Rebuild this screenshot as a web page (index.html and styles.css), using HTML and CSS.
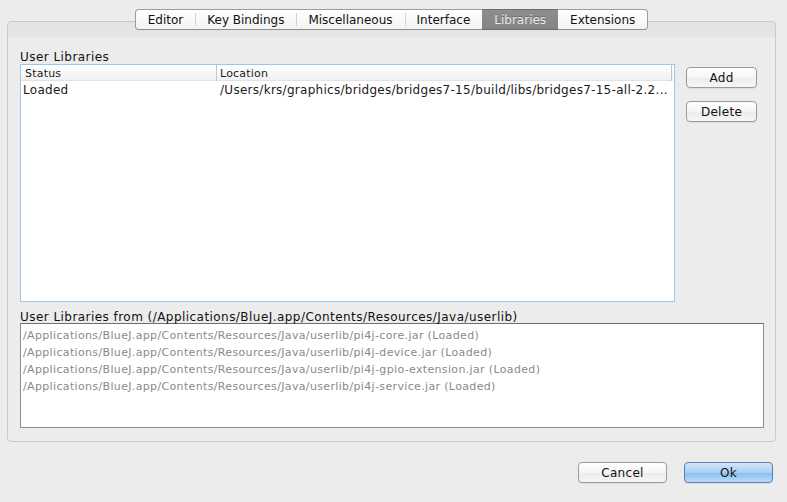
FILE: index.html
```html
<!DOCTYPE html>
<html>
<head>
<meta charset="utf-8">
<link rel="stylesheet" href="styles.css">
</head>
<body>
<div class="dialog">
  <div class="tabs">
    <div class="tab">Editor</div>
    <div class="tab">Key Bindings</div>
    <div class="tab">Miscellaneous</div>
    <div class="tab">Interface</div>
    <div class="tab selected">Libraries</div>
    <div class="tab last">Extensions</div>
  </div>
  <div class="panel">
    <div class="label">User Libraries</div>
    <div class="top">
      <div class="table">
        <div class="thead">
          <div class="th c1">Status</div>
          <div class="th c2">Location</div>
        </div>
        <div class="tr">
          <div class="td c1">Loaded</div>
          <div class="td c2">/Users/krs/graphics/bridges/bridges7-15/build/libs/bridges7-15-all-2.2...</div>
        </div>
      </div>
      <div class="side">
        <button class="btn">Add</button>
        <button class="btn">Delete</button>
      </div>
    </div>
    <div class="label second">User Libraries from (/Applications/BlueJ.app/Contents/Resources/Java/userlib)</div>
    <div class="list">
      <div class="item">/Applications/BlueJ.app/Contents/Resources/Java/userlib/pi4j-core.jar (Loaded)</div>
      <div class="item">/Applications/BlueJ.app/Contents/Resources/Java/userlib/pi4j-device.jar (Loaded)</div>
      <div class="item">/Applications/BlueJ.app/Contents/Resources/Java/userlib/pi4j-gpio-extension.jar (Loaded)</div>
      <div class="item">/Applications/BlueJ.app/Contents/Resources/Java/userlib/pi4j-service.jar (Loaded)</div>
    </div>
  </div>
  <div class="footer">
    <button class="btn wide">Cancel</button>
    <button class="btn wide primary">Ok</button>
  </div>
</div>
</body>
</html>
```

FILE: styles.css
```css
html, body {
  margin: 0;
  padding: 0;
  background: #ececec;
  font-family: "DejaVu Sans", "Liberation Sans", sans-serif;
  font-size: 11px;
  color: #1a1a1a;
}
.dialog {
  width: 787px;
  height: 502px;
  box-sizing: border-box;
  padding: 9px 11px 0 7px;
}
.tabs {
  display: flex;
  justify-content: center;
  height: 21px;
  margin-bottom: -9px;
  position: relative;
  z-index: 1;
}
.tab {
  height: 19px;
  line-height: 20px;
  font-size: 12px;
  padding: 0 12px;
  background: linear-gradient(#ffffff, #f3f3f3);
  border-top: 1px solid #9c9c9c;
  border-bottom: 1px solid #8e8e8e;
  position: relative;
  color: #111;
}
.tab:first-child {
  border-left: 1px solid #9c9c9c;
  border-radius: 4px 0 0 4px;
}
.tab.last {
  border-right: 1px solid #9c9c9c;
  border-radius: 0 4px 4px 0;
}
.tab + .tab::before {
  content: "";
  position: absolute;
  left: 0;
  top: 3px;
  bottom: 3px;
  width: 1px;
  background: #d4d4d4;
}
.tab.selected {
  background: linear-gradient(#8e8e8e, #848484);
  color: #ececec;
  text-shadow: 0 -1px 0 #6a6a6a;
  border-top-color: #6e6e6e;
  border-bottom-color: #6e6e6e;
}
.tab.selected::before, .tab.selected + .tab::before {
  display: none;
}
.panel {
  height: 421px;
  box-sizing: border-box;
  border: 1px solid #c9c9c9;
  border-radius: 4px;
  background: linear-gradient(#e4e4e4 0, #e4e4e4 15px, #ececec 15px);
  padding: 26px 11px 0 12px;
}
.label {
  font-size: 12px;
  line-height: 19px;
  height: 16px;
  color: #111;
  letter-spacing: 0.45px;
  white-space: nowrap;
}
.label.second {
  margin-top: 5px;
  height: 16px;
  line-height: 20px;
}
.top {
  display: flex;
  gap: 11px;
}
.table {
  width: 655px;
  height: 238px;
  box-sizing: border-box;
  border: 1px solid #9fc6ea;
  background: #fff;
}
.thead {
  display: flex;
  height: 16px;
  background: linear-gradient(#ffffff, #f1f1f1);
  border-bottom: 1px solid #e2e2e2;
  box-sizing: border-box;
  font-size: 11px;
  line-height: 16px;
  margin-right: 1px;
  letter-spacing: 0.2px;
}
.th {
  padding-top: 1px;
  height: 15px;
  line-height: 15px;
}
.th.c1 {
  width: 191px;
  padding-left: 4px;
  border-right: 1px solid #c4c4c4;
}
.th.c2 {
  flex: 1;
  padding-left: 3px;
  border-right: 1px solid #c4c4c4;
  margin-right: 1px;
}
.tr {
  display: flex;
  height: 18px;
  line-height: 19px;
  font-size: 12px;
  letter-spacing: 0.28px;
}
.td.c1 {
  width: 197px;
  padding-left: 2px;
}
.td.c2 {
  flex: 1;
  white-space: nowrap;
  overflow: hidden;
}
.side {
  display: flex;
  flex-direction: column;
  gap: 13px;
  padding-top: 3px;
}
.btn {
  width: 71px;
  height: 21px;
  box-sizing: border-box;
  font-family: "DejaVu Sans", "Liberation Sans", sans-serif;
  font-size: 12px;
  color: #111;
  background: linear-gradient(#ffffff, #f5f5f5 50%, #ececec 51%, #f6f6f6);
  border: 1px solid #9a9a9a;
  border-radius: 4px;
  box-shadow: 0 1px 0 rgba(0,0,0,0.06);
  padding: 0;
  line-height: 18px;
  letter-spacing: 0.3px;
}
.list {
  height: 105px;
  box-sizing: border-box;
  border: 1px solid #8e8e8e;
  border-top-color: #6e6e6e;
  background: #fff;
  padding: 3px 0 0 2px;
}
.item {
  color: #8a8a8a;
  font-size: 11px;
  line-height: 17px;
  height: 17px;
  white-space: nowrap;
  letter-spacing: 0.35px;
}
.footer {
  display: flex;
  justify-content: flex-end;
  gap: 17px;
  margin-top: 20px;
  margin-right: 3px;
}
.btn.wide {
  width: 89px;
}
.btn.primary {
  background: linear-gradient(#d2e6fa, #a9cff4 50%, #86bdf0 51%, #b6dcfb);
  border-color: #5b7fae;
}
```
